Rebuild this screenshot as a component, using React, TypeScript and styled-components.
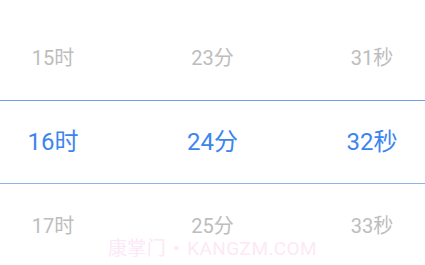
import styled, { createGlobalStyle } from 'styled-components'

const GlobalStyle = createGlobalStyle`
    html, body {
        margin: 0;
        padding: 0;
        background: #ffffff;
    }
    body {
        font-family: Roboto, "Noto Sans CJK SC", sans-serif;
    }
`

const rows = [
    { hour: 15, minute: 23, second: 31 },
    { hour: 16, minute: 24, second: 32, active: true },
    { hour: 17, minute: 25, second: 33 },
]

function App() {
    return (
        <>
            <GlobalStyle />
            <Page>
                <Picker>
                    {rows.map(row => (
                        <Row key={row.hour} $active={!!row.active}>
                            <Cell $active={!!row.active}>{row.hour}时</Cell>
                            <Cell $active={!!row.active}>{row.minute}分</Cell>
                            <Cell $active={!!row.active}>{row.second}秒</Cell>
                        </Row>
                    ))}
                </Picker>
                <Watermark>康掌门 • KANGZM.COM</Watermark>
            </Page>
        </>
    )
}

const Page = styled.div`
    position: relative;
    width: 425px;
    height: 265px;
    overflow: hidden;
    padding-top: 16px;
    box-sizing: border-box;
    background: #fff;
`

const Picker = styled.div`
    display: flex;
    flex-direction: column;
`

const Row = styled.div<{ $active: boolean }>`
    display: flex;
    justify-content: space-between;
    align-items: center;
    height: 84px;
    padding: 0 8px;
    box-sizing: border-box;
    border-top: 1px solid ${p => (p.$active ? '#6f9fe6' : 'transparent')};
    border-bottom: 1px solid ${p => (p.$active ? '#8fb3ea' : 'transparent')};
`

const Cell = styled.div<{ $active: boolean }>`
    width: 90px;
    text-align: center;
    font-size: ${p => (p.$active ? '24px' : '20px')};
    color: ${p => (p.$active ? '#3c85ee' : '#bdbdbd')};
    line-height: 1;
`

const Watermark = styled.div`
    position: absolute;
    left: 0;
    right: 0;
    top: 233px;
    text-align: center;
    font-size: 19px;
    color: #fde8f6;
    letter-spacing: 0.4px;
    word-spacing: 2px;
    pointer-events: none;
`

export default App
